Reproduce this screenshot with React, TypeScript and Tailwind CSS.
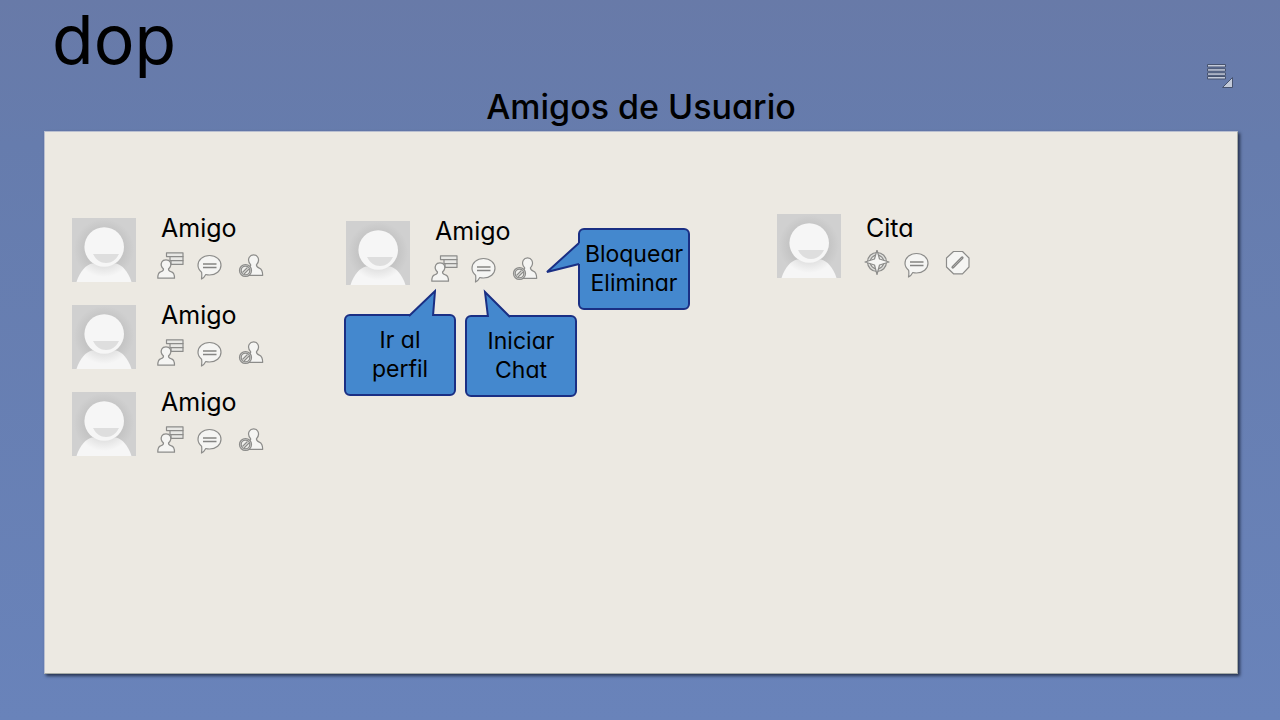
import type { ReactNode } from "react";

function Avatar() {
  return (
    <svg viewBox="0 0 64 64" className="size-16 shrink-0" role="img" aria-label="Foto">
      <defs>
        <radialGradient id="shade" cx="32" cy="31" r="30" gradientUnits="userSpaceOnUse">
          <stop offset="0.65" stopColor="#c4c4c4" />
          <stop offset="1" stopColor="#d0d0d0" />
        </radialGradient>
        <radialGradient id="body" cx="32" cy="30" r="29" gradientUnits="userSpaceOnUse">
          <stop offset="0.64" stopColor="#e2e2e2" />
          <stop offset="1" stopColor="#f6f6f6" />
        </radialGradient>
      </defs>
      <rect width="64" height="64" fill="url(#shade)" />
      <path d="M4.500 64C8 53 14 47 20 45.500H44C50 47 56 53 59.500 64Z" fill="url(#body)" />
      <circle cx="32.200" cy="29" r="19.800" fill="#f6f6f6" />
      <path d="M21 36H47C44 42 39.500 45 34 45S24 42 21 36Z" fill="#dedede" />
    </svg>
  );
}

function Icon({ children }: { children: ReactNode }) {
  return (
    <svg
      viewBox="0 0 28 28"
      className="block size-7"
      fill="#f5f5f3"
      stroke="#8c8c8a"
      strokeWidth="1.2"
      strokeLinejoin="round"
      aria-hidden="true"
    >
      {children}
    </svg>
  );
}

function ProfileIcon() {
  return (
    <Icon>
      <path d="M9.500 0.800H26V4.600H9.500Z" fill="#e8e8e5" />
      <path d="M13 4.600H26V8.700H13Z" fill="#e8e8e5" />
      <path d="M14 8.700H26V12.400H14Z" fill="#e8e8e5" />
      <path d="M6.500 17C4.300 15 3.800 12 4.800 10C6.200 7.200 11.800 7.200 13.200 10C14.200 12 13.700 15 11.500 17C11.500 19.300 12.800 19.400 14.500 19.900C17.200 20.800 17.500 22.500 17.500 26.200H0.800C0.800 22.500 1 20.800 3.500 19.900C5.200 19.400 6.500 19.300 6.500 17Z" />
    </Icon>
  );
}

function ChatIcon() {
  return (
    <Icon>
      <path d="M12.500 3.500C19.200 3.500 24 7.800 24 13.300C24 18.800 19 23 12.500 23C11 23 9.800 22.800 8.800 22.500C7.800 24.500 6.500 26 4.500 27C4.900 24.800 5 22.500 4.600 20.200C2.300 18.500 1 16.200 1 13.300C1 7.800 5.800 3.500 12.500 3.500Z" />
      <path d="M6 12H19.500M6 15.500H19.500" stroke="#858583" strokeWidth="1.600" />
    </Icon>
  );
}

function BlockIcon() {
  return (
    <Icon>
      <path d="M13.700 12.800C11.600 10.500 11.200 7.200 12.300 5.200C14 2.200 19.200 2.200 20.800 5.200C22 7.500 21.300 10.800 19.400 12.800C19.400 15 20.500 15.400 22.300 16.100C25.300 17.300 25.700 19.500 25.700 23.300H11V16C13 15.400 13.700 14.800 13.700 12.800Z" />
      <circle cx="8.500" cy="18.500" r="6" fill="#d9d9d6" />
      <circle cx="8.500" cy="18.500" r="4.300" fill="#efefec" />
      <path d="M5.500 20.500L10.500 15.500M7 22L12 17" />
    </Icon>
  );
}

function TargetIcon() {
  return (
    <Icon>
      <circle cx="13" cy="12" r="9.500" fill="#dededb" />
      <circle cx="13" cy="12" r="6.800" fill="#e9e9e6" />
      <path d="M13 0L15.500 9L25 12L15.500 15L13 24.500L10.500 15L1 12L10.500 9Z" />
    </Icon>
  );
}

function ForbidIcon() {
  return (
    <Icon>
      <path d="M9.500 1.500H18.500L25 8V17L18.500 23.800H9.500L2.500 17V8Z" />
      <path d="M8.800 17.200L18.200 7.800" stroke="#858583" strokeWidth="2.800" strokeLinecap="round" />
      <path d="M8.800 17.200L18.200 7.800" stroke="#b4b4b2" strokeWidth="0.800" />
    </Icon>
  );
}

function Action({ label, children }: { label: string; children: ReactNode }) {
  return (
    <button type="button" aria-label={label} title={label} className="cursor-pointer">
      {children}
    </button>
  );
}

function Friend({ children }: { children?: ReactNode }) {
  return (
    <li className="relative flex h-16">
      <Avatar />
      <div className="ml-[21px]">
        <h2 className="h-[34px] pl-1 text-[25px] leading-5">Amigo</h2>
        <div className="flex gap-3">
          <Action label="Ir al perfil"><ProfileIcon /></Action>
          <Action label="Iniciar chat"><ChatIcon /></Action>
          <Action label="Bloquear o eliminar"><BlockIcon /></Action>
        </div>
      </div>
      {children}
    </li>
  );
}

function Callout({ place, tail, children }: { place: string; tail: ReactNode; children: ReactNode }) {
  return (
    <div
      role="tooltip"
      className={`absolute flex h-[82px] w-28 items-center justify-center rounded-md border-2 border-[#1a2f84] bg-[#4488ce] text-center text-[23px] leading-[29px] ${place}`}
    >
      {tail}
      <p>{children}</p>
    </div>
  );
}

const tailStyle = "absolute fill-[#4488ce] stroke-[#1a2f84] stroke-2";

export default function App() {
  return (
    <div className="flex min-h-screen flex-col bg-linear-to-b from-[#687aa8] via-[#667cad] via-20% to-[#6983ba] pr-[42px] pb-[46px] pl-11 font-['Inter',sans-serif] text-black [font-feature-settings:'cv11']">
      <header className="grid h-[131px] grid-cols-[1fr_auto_1fr]">
        <a href="#inicio" className="justify-self-start pl-2 text-[68px] leading-[78px]">dop</a>
        <h1 className="self-end pb-1 text-[34px] leading-10 font-medium">Amigos de Usuario</h1>
        <button type="button" aria-label="Menú" className="mt-16 mr-1 cursor-pointer self-start justify-self-end">
          <svg viewBox="0 0 28 25" className="block h-[25px] w-7" fill="#c3cad9" stroke="#47536f" strokeWidth="1" aria-hidden="true">
            <path d="M1.500 0.500H19.500V3H1.500ZM1.500 4.700H19.500V7.200H1.500ZM1.500 8.800H19.500V11.300H1.500ZM1.500 12.500H19.500V15H1.500Z" />
            <path d="M26.500 13.500V23.500H16.500Z" />
          </svg>
        </button>
      </header>

      <main className="grid flex-1 grid-cols-[274px_431px_1fr] items-start border border-t-[#b9bfd0] border-r-[#a5aaa6] border-b-[#a5aaa6] border-l-[#b9bfd0] bg-[#ece9e2] pl-[27px] shadow-[2px_2px_3px_#27334f]">
        <ul className="flex flex-col gap-[23px] pt-[86px]">
          <Friend />
          <Friend />
          <Friend />
        </ul>

        <ul className="pt-[89px]">
          <Friend>
            <Callout
              place="top-[93px] -left-0.5"
              tail={
                <svg viewBox="0 0 28 30" className={`${tailStyle} -top-7 left-[62px] h-[30px] w-7`} aria-hidden="true">
                  <path d="M1 28H25V30H1Z" stroke="none" />
                  <path d="M1 28L27 3L25 28" />
                </svg>
              }
            >
              Ir al<br />perfil
            </Callout>
            <Callout
              place="top-[94px] left-[119px]"
              tail={
                <svg viewBox="0 0 28 30" className={`${tailStyle} -top-7 left-4 h-[30px] w-7`} aria-hidden="true">
                  <path d="M5 28H27V30H5Z" stroke="none" />
                  <path d="M5 28L2 3L27 28" />
                </svg>
              }
            >
              Iniciar<br />Chat
            </Callout>
            <Callout
              place="top-[7px] left-[232px]"
              tail={
                <svg viewBox="0 0 36 34" className={`${tailStyle} top-2.5 -left-[35px] h-[34px] w-9`} aria-hidden="true">
                  <path d="M34 3V24H36V3Z" stroke="none" />
                  <path d="M34 3L2 32L34 24" />
                </svg>
              }
            >
              Bloquear<br />Eliminar
            </Callout>
          </Friend>
        </ul>

        <ul className="pt-[82px]">
          <li className="flex h-16">
            <Avatar />
            <div className="ml-[23px]">
              <h2 className="h-9 pt-1 pl-0.5 text-[25px] leading-5">Cita</h2>
              <div className="flex gap-3">
                <Action label="Localizar"><TargetIcon /></Action>
                <Action label="Iniciar chat"><ChatIcon /></Action>
                <Action label="Cancelar cita"><ForbidIcon /></Action>
              </div>
            </div>
          </li>
        </ul>
      </main>
    </div>
  );
}
